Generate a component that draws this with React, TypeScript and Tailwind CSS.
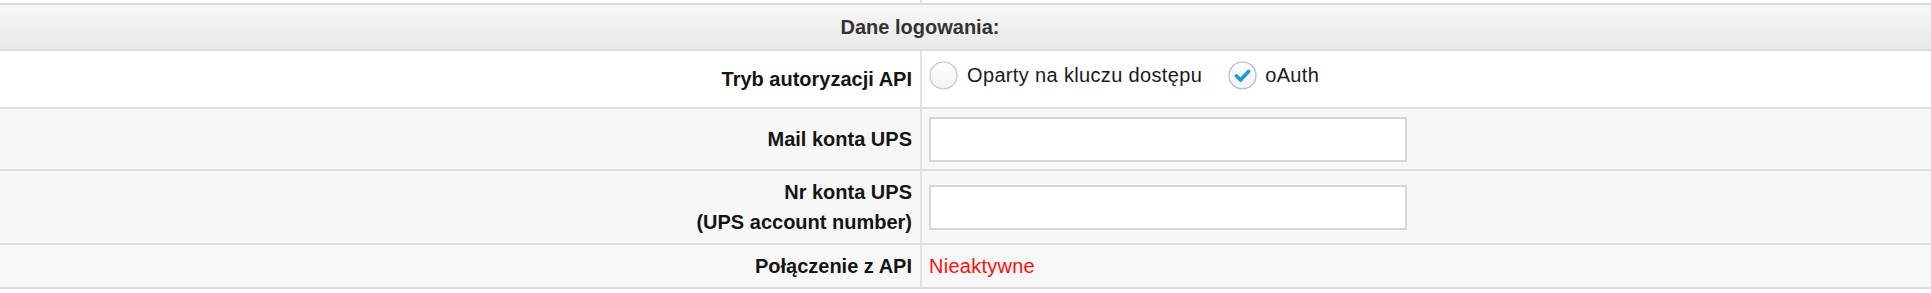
import type { ReactNode } from 'react'

// ─── Shared bits ──────────────────────────────────────────────────────────────

const FONT = { fontFamily: '"Liberation Sans", Arial, Helvetica, sans-serif' }

function Row({
  label,
  bg = 'bg-[#f7f7f7]',
  height,
  alignTop = false,
  children,
}: {
  label?: ReactNode
  bg?: string
  height: string
  alignTop?: boolean
  children?: ReactNode
}) {
  return (
    <div className={`grid grid-cols-[922px_1fr] border-b-2 border-[#dedede] ${bg} ${height}`}>
      <div className="flex items-center justify-end border-r-2 border-[#e2e2e2] pr-2 text-right text-[20px] font-bold leading-[30px] text-[#141414]">
        {label}
      </div>
      <div className={`flex pl-[7px] ${alignTop ? 'items-start pt-[9px]' : 'items-center'}`}>
        {children}
      </div>
    </div>
  )
}

function Radio({ checked }: { checked?: boolean }) {
  return (
    <svg width="29" height="29" viewBox="0 0 29 29" aria-hidden="true" className="shrink-0">
      <defs>
        <linearGradient id={checked ? 'rg-on' : 'rg-off'} x1="0" y1="0" x2="0" y2="1">
          <stop offset="0" stopColor="#ffffff" />
          <stop offset="1" stopColor={checked ? '#eef3f8' : '#f2f2f2'} />
        </linearGradient>
      </defs>
      <circle
        cx="14.5"
        cy="14.5"
        r="13.5"
        fill={`url(#${checked ? 'rg-on' : 'rg-off'})`}
        stroke={checked ? '#a9bccd' : '#c4c4c4'}
        strokeWidth="1.2"
      />
      {checked && (
        <path
          d="M8.5 15 L12.6 19 L20.5 10.5"
          fill="none"
          stroke="#2b97d3"
          strokeWidth="3.8"
          strokeLinecap="round"
          strokeLinejoin="round"
        />
      )}
    </svg>
  )
}

function TextInput() {
  return (
    <input
      type="text"
      className="h-[45px] w-[478px] border-2 border-[#d6d6d6] bg-white outline-none"
    />
  )
}

// ─── Main View ────────────────────────────────────────────────────────────────

export default function App() {
  return (
    <div className="min-h-[293px] w-full bg-white" style={FONT}>
      {/* tail of the previous row */}
      <div className="grid h-[3px] grid-cols-[922px_1fr]">
        <div className="border-r-2 border-[#e2e2e2]" />
        <div />
      </div>

      {/* ── Section header ─────────────────────────────────────────────── */}
      <div className="flex h-[48px] items-center justify-center border-y-2 border-[#dcdcdc] bg-gradient-to-b from-[#f7f7f7] to-[#e9e9e9] pr-[91px] text-[20px] font-bold text-[#333]">
        Dane logowania:
      </div>

      {/* ── Fields ─────────────────────────────────────────────────────── */}
      <Row label="Tryb autoryzacji API" bg="bg-white" height="h-[58px]" alignTop>
        <div className="flex items-center text-[20px] tracking-[0.35px] text-[#1a1a1a]">
          <Radio />
          <span className="ml-[9px]">Oparty na kluczu dostępu</span>
          <span className="ml-[26px]">
            <Radio checked />
          </span>
          <span className="ml-[8px]">oAuth</span>
        </div>
      </Row>

      <Row label="Mail konta UPS" height="h-[62px]">
        <TextInput />
      </Row>

      <Row
        label={
          <span>
            Nr konta UPS
            <br />
            (UPS account number)
          </span>
        }
        height="h-[74px]"
      >
        <div className="pt-[1px]">
          <TextInput />
        </div>
      </Row>

      <Row label="Połączenie z API" bg="bg-[#f8f8f8]" height="h-[44px]">
        <span className="text-[20px] tracking-[0.25px] text-[#ff0d0d]">Nieaktywne</span>
      </Row>
    </div>
  )
}
